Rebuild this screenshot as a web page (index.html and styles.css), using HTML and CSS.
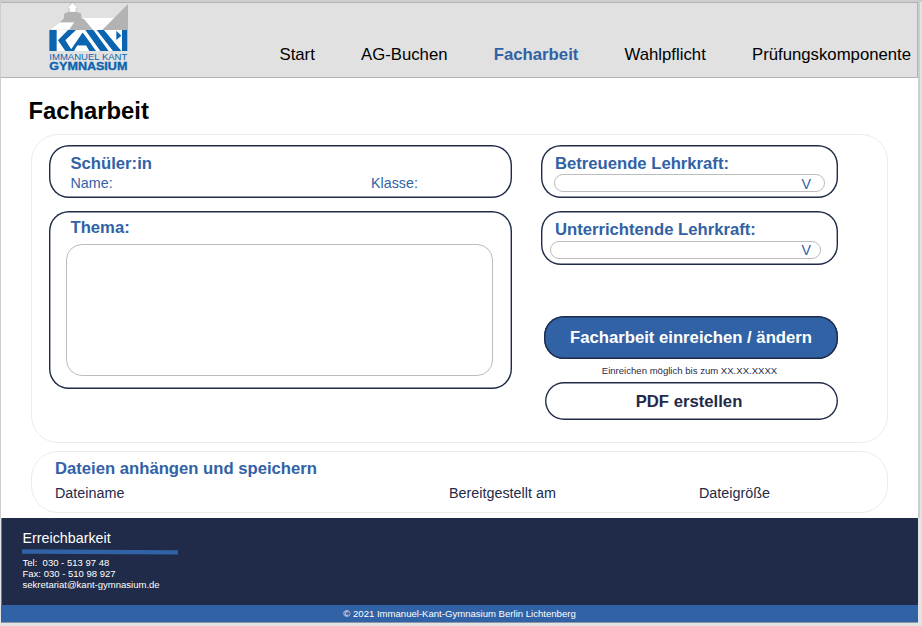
FILE: index.html
```html
<!DOCTYPE html>
<html lang="de">
<head>
<meta charset="utf-8">
<title>Facharbeit</title>
<link rel="stylesheet" href="styles.css">
</head>
<body>
<div class="page">
  <header class="header">
    <svg class="logo" viewBox="0 0 300 234" role="img" aria-label="Immanuel Kant Gymnasium">
      <path fill="#fff" stroke="#bdbdbd" stroke-width="2" d="M97 8L84 22V26H88V37H108V26H112V22Z"/>
      <path fill="#b3b3b3" d="M84 36H112L124 41V54L132 57L162 91H86L103 67H60L72 54V41Z"/>
      <path fill="#fff" stroke="#c4c4c4" stroke-width="1.5" d="M28 90L58 67H103L87 90Z"/>
      <path fill="#fff" d="M124 54H224L188 91H160L132 57Z"/>
      <path fill="#b3b3b3" d="M264 12V91H186Z"/>
      <path fill="#fff" d="M28 90H262V153H28Z"/>
      <path fill="#0a64b0" d="M28 90H50V153H28ZM54 121L84 90H108L76 121L97 153H76ZM90 153L128 98L168 153H148L138 136H112L102 153ZM136 90H160L206 153H181ZM170 90H192L244 153H219ZM229 92L244 107L229 120ZM246 90H262V153H246Z"/>
      <path fill="#0a64b0" d="M128 98L155 136H103Z"/>
      <text class="logo-name" x="28" y="179" textLength="234" lengthAdjust="spacingAndGlyphs">IMMANUEL KANT</text>
      <text class="logo-type" x="28" y="210" textLength="234" lengthAdjust="spacingAndGlyphs">GYMNASIUM</text>
    </svg>
    <nav class="nav">
      <a>Start</a><a>AG-Buchen</a><a class="active">Facharbeit</a><a>Wahlpflicht</a><a>Prüfungskomponente</a>
    </nav>
  </header>
  <main class="main">
    <h1>Facharbeit</h1>
    <section class="panel form">
      <div class="left">
        <div class="box student">
          <h2>Schüler:in</h2>
          <div class="fields"><span>Name:</span><span>Klasse:</span></div>
        </div>
        <div class="box topic">
          <h2>Thema:</h2>
          <div class="textarea"></div>
        </div>
      </div>
      <div class="right">
        <div class="box teacher">
          <h2>Betreuende Lehrkraft:</h2>
          <div class="select">V</div>
        </div>
        <div class="box teacher second">
          <h2>Unterrichtende Lehrkraft:</h2>
          <div class="select">V</div>
        </div>
        <div class="button primary">Facharbeit einreichen / ändern</div>
        <p class="hint">Einreichen möglich bis zum XX.XX.XXXX</p>
        <div class="button secondary">PDF erstellen</div>
      </div>
    </section>
    <section class="panel files">
      <h2>Dateien anhängen und speichern</h2>
      <div class="columns"><span>Dateiname</span><span>Bereitgestellt am</span><span>Dateigröße</span></div>
    </section>
  </main>
  <footer class="footer">
    <h3>Erreichbarkeit</h3>
    <svg class="rule" viewBox="0 0 156 6"><path d="M0 .3L156 1.2V5.6L0 4.8Z"/></svg>
    <p>Tel:&nbsp; 030 - 513 97 48</p>
    <p>Fax: 030 - 510 98 927</p>
    <p>sekretariat@kant-gymnasium.de</p>
  </footer>
  <div class="copyright">© 2021 Immanuel-Kant-Gymnasium Berlin Lichtenberg</div>
</div>
</body>
</html>
```
FILE: styles.css
```css
* { box-sizing: border-box; margin: 0; padding: 0; }
body {
  width: 922px; height: 626px; overflow: hidden;
  background: #e4e4e4;
  font-family: "Liberation Sans", Arial, sans-serif;
  color: #1f2b48;
}
.page {
  width: 922px; height: 626px;
  padding: 2px 4px 0 1px;
  background: linear-gradient(#cdcdcd, #cdcdcd) 0 0 / 922px 2px no-repeat,
    linear-gradient(#cdcdcd, #cdcdcd) 0 0 / 1px 518px no-repeat,
    linear-gradient(#cdcdcd, #cdcdcd) 918px 0 / 2px 518px no-repeat;
}
.header {
  display: flex; align-items: flex-start;
  height: 76px;
  background: #e1e1e1;
  border: 1px solid #b3b3b3; border-left: 0;
}
.logo { width: 100px; height: 78px; margin: -3px 0 0 39px; flex: none; }
.logo text { fill: #0a64b0; font-size: 28px; }
.logo .logo-type { font-weight: 700; font-size: 32px; stroke: #0a64b0; stroke-width: 1px; }
.nav {
  display: flex; gap: 46.2px;
  margin: 42px 0 0 139.5px;
  font-size: 16.74px; line-height: 19px; color: #000;
  white-space: nowrap;
}
.nav .active { font-weight: 700; color: #3162a5; }
.main { height: 440px; background: #fff; padding: 18px 0 0 30px; }
h1 { font-size: 23.8px; line-height: 28px; margin: 1px 0 0 -2.5px; color: #000; }
.panel { width: 857px; border: 1px solid #ebebeb; border-radius: 27px; }
h2 { font-size: 16.67px; line-height: 19px; color: #3162a5; white-space: nowrap; }
.form { display: flex; gap: 29px; height: 309px; margin-top: 9px; padding: 10px 0 0 17px; }
.left { width: 463px; }
.right { width: 297px; }
.box { border-radius: 20px; box-shadow: inset 0 0 0 1.4px #1f2b48; }
.student { height: 53px; padding: 9px 21.5px; }
.fields { display: grid; grid-template-columns: 300.5px 1fr; font-size: 14.3px; line-height: 16px; margin-top: 2px; color: #3162a5; }
.topic { height: 178px; margin-top: 13px; padding: 7px 19px 0 17px; }
.topic h2 { margin-left: 4.5px; }
.textarea { height: 132px; margin-top: 7px; border: 1px solid #bcbcbc; border-radius: 16px; }
.teacher { height: 53px; padding: 9px 13px 0; }
.teacher h2 { margin-left: 1px; }
.select {
  width: 271px; height: 18px; margin-top: 1px; padding-right: 13px;
  border: 1px solid #bcbcbc; border-radius: 9px;
  font-size: 14.3px; line-height: 18px; text-align: right; color: #3162a5;
}
.second { height: 54px; margin-top: 13px; }
.second .select { margin-top: 2px; margin-left: -4px; padding-right: 9px; line-height: 16px; }
.button {
  display: flex; align-items: center; justify-content: center;
  border-radius: 20px; box-shadow: inset 0 0 0 1.4px #1f2b48;
  font-size: 16.7px; font-weight: 700;
}
.primary { height: 43px; margin: 51px 0 0 3px; background: #3162a5; color: #fff; }
.hint { margin: 6px 0 0; font-size: 9.57px; line-height: 12px; text-align: center; }
.secondary { height: 38px; margin: 5px 0 0 4px; padding: 1px 5px 0 0; }
.files { height: 62px; margin-top: 8px; padding: 7px 23px; }
.columns { display: grid; grid-template-columns: 394px 250px 1fr; margin-top: 7px; font-size: 14.35px; line-height: 17px; }
.footer { height: 87px; padding: 12px 0 0 20.5px; background: #1f2b48; color: #fff; border-left: 1px solid #77777f; }
.footer h3 { font-size: 14.3px; line-height: 17px; font-weight: 400; }
.rule { display: block; width: 156px; height: 6px; margin: 2px 0 2px -1px; fill: #3162a5; }
.footer p { font-size: 9.53px; line-height: 11px; }
.copyright { height: 18px; background: #3162a5; border-bottom: 1px solid #8d96a5; color: #fff; font-size: 9.57px; line-height: 18px; text-align: center; }
```
